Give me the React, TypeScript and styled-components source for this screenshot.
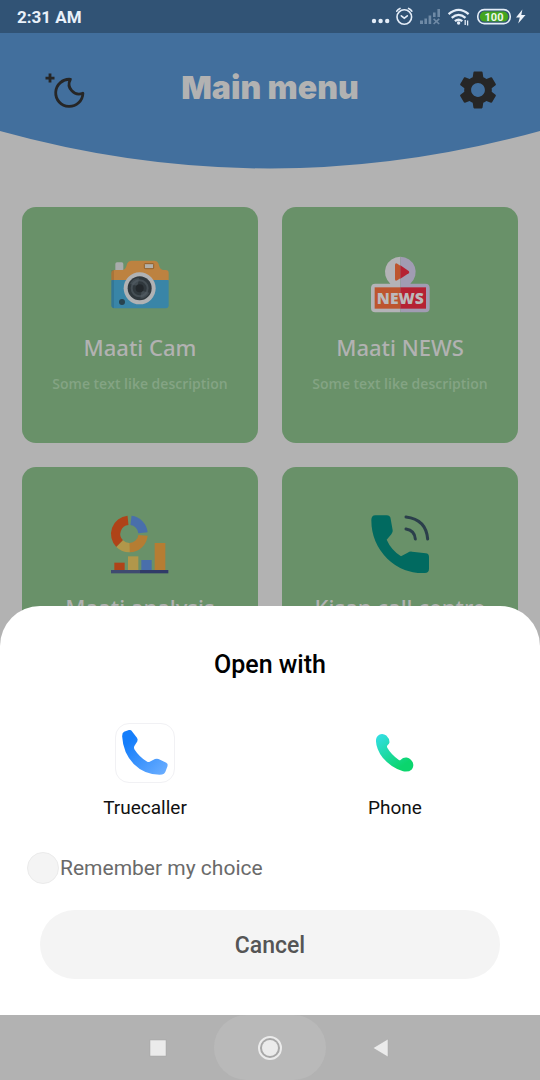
import React from "react";
import styled, { createGlobalStyle } from "styled-components";
import { MdSettings } from "react-icons/md";

const GlobalStyle = createGlobalStyle`
  *, *::before, *::after { box-sizing: border-box; }
  body { margin: 0; background: #b2b2b2; font-family: Roboto, sans-serif; }
  button, input { font: inherit; }
`;

const Screen = styled.div`
  min-height: 100vh;
  overflow: hidden;
`;

const StatusBar = styled.div`
  display: flex;
  align-items: center;
  justify-content: space-between;
  height: 33px;
  padding: 0 14px 0 17px;
  background: #315375;
`;

const Clock = styled.time`
  color: #e9f1fa;
  font-size: 17px;
  line-height: 20px;
  font-weight: 700;
`;

const StatusIcons = styled.svg`
  display: block;
  width: 156px;
  height: 33px;
`;

const Header = styled.header`
  display: flex;
  align-items: center;
  justify-content: space-between;
  height: 98px;
  padding: 16px 39px 0;
  background: #426f9d;
`;

const Title = styled.h1`
  margin: 0 0 4px;
  color: #b2b2b2;
  font-family: Inter, sans-serif;
  font-size: 32px;
  line-height: 40px;
  font-weight: 900;
`;

const IconButton = styled.button`
  display: flex;
  align-items: center;
  justify-content: center;
  width: 46px;
  height: 46px;
  padding: 0;
  border: 0;
  background: none;
  color: #262626;
`;

const Curve = styled.svg`
  display: block;
  width: 100%;
  height: 38px;
`;

const CardGrid = styled.main`
  display: grid;
  grid-template-columns: 1fr 1fr;
  gap: 24px;
  padding: 38px 22px;
`;

const Card = styled.article`
  display: flex;
  flex-direction: column;
  align-items: center;
  aspect-ratio: 1;
  padding-top: 47px;
  border-radius: 14px;
  background: #699169;
`;

const CardIcon = styled.svg`
  width: 60px;
  height: 60px;
`;

const CardTitle = styled.h2`
  margin: 18px 0 12px;
  color: #b2b2b2;
  font-family: "Noto Sans", sans-serif;
  font-size: 22px;
  line-height: 30px;
  font-weight: 500;
`;

const CardText = styled.p`
  margin: 0;
  color: #84a484;
  font-family: "Open Sans", sans-serif;
  font-size: 14px;
  line-height: 20px;
  font-weight: 600;
`;

const Overlay = styled.div`
  position: fixed;
  left: 0;
  right: 0;
  bottom: 0;
`;

const Sheet = styled.section`
  display: flex;
  flex-direction: column;
  padding: 43px 20px 36px;
  border-radius: 40px 40px 0 0;
  background: #fff;
`;

const SheetTitle = styled.h2`
  margin: 0 0 42px;
  color: #000;
  font-size: 25px;
  line-height: 32px;
  font-weight: 500;
  text-align: center;
`;

const AppList = styled.div`
  display: grid;
  grid-template-columns: 1fr 1fr;
`;

const AppButton = styled.button`
  display: flex;
  flex-direction: column;
  align-items: center;
  gap: 13px;
  padding: 0;
  border: 0;
  background: none;
  color: #111;
  font-size: 19px;
  line-height: 24px;
`;

const AppTile = styled.span<{ $outlined?: boolean }>`
  display: block;
  width: 60px;
  height: 60px;
  border-radius: 14px;
  border: 1px solid ${(p) => (p.$outlined ? "#f1f1f4" : "transparent")};

  svg { display: block; width: 100%; height: 100%; }
`;

const Remember = styled.label`
  display: flex;
  align-items: center;
  gap: 1px;
  margin: 32px 0 26px 7px;
  color: #6a6a6a;
  font-size: 21px;
  line-height: 32px;
`;

const RoundCheck = styled.input`
  appearance: none;
  width: 32px;
  height: 32px;
  margin: 0;
  border: 1px solid #ebebeb;
  border-radius: 50%;
  background: #f4f4f4;

  &:checked { background: #1a84ff; }
`;

const CancelButton = styled.button`
  height: 69px;
  margin: 0 20px;
  padding: 3px 0 0;
  border: 0;
  border-radius: 35px;
  background: #f4f4f4;
  color: #555;
  font-size: 23px;
  line-height: 28px;
  font-weight: 500;
`;

const NavBar = styled.nav`
  display: flex;
  justify-content: center;
  height: 65px;
  background: #b2b2b2;
`;

const NavButton = styled.button<{ $pressed?: boolean }>`
  display: flex;
  align-items: center;
  justify-content: center;
  width: 112px;
  padding: 0;
  border: 0;
  border-radius: 33px;
  background: ${(p) => (p.$pressed ? "#b9b9b9" : "transparent")};
`;

const StatusGlyphs = () => (
  <StatusIcons viewBox="370 0 156 33" aria-hidden="true">
    <g fill="#e4edf8">
      <circle cx="374" cy="21" r="2.2" />
      <circle cx="380.6" cy="21" r="2.2" />
      <circle cx="387.2" cy="21" r="2.2" />
    </g>
    <g fill="none" stroke="#e4edf8" strokeWidth="1.6" strokeLinecap="round">
      <circle cx="404.3" cy="17" r="7.3" />
      <path d="M401.3 15.8l3 2.4 3-2.4M396.8 11.2q1-2 3.2-2.8M411.8 11.2q-1-2-3.2-2.8" />
    </g>
    <g fill="#6f8aa6">
      <path d="M420 20.500h3V24h-3zM424.4 18.5h2.6V24h-2.6zM428.6 15.6h2.6V24h-2.6zM433 12.4h2.6V17H433zM437.4 9h2.6v8h-2.6z" />
      <path d="M433.6 18.8l5.6 5.2M439.2 18.8l-5.6 5.2" stroke="#6f8aa6" strokeWidth="1.6" />
    </g>
    <g fill="none" stroke="#e4edf8" strokeWidth="2.3">
      <path d="M448.6 14.2q10-8.6 20 0M451.7 17.8q6.900-5.8 13.8 0M454.9 21.2q3.7-3 7.4 0" />
    </g>
    <circle cx="458.6" cy="23" r="1.7" fill="#e4edf8" />
    <path d="M465.2 20v5M467.6 20.6v5" stroke="#e4edf8" strokeWidth="1.3" />
    <rect x="477.8" y="9.6" width="32.4" height="14" rx="6.4" fill="none" stroke="#e4edf8" strokeWidth="1.6" />
    <rect x="480" y="11.6" width="28" height="10" rx="4.4" fill="#43a51f" />
    <text x="494" y="20.800" textAnchor="middle" fontFamily="Roboto, sans-serif" fontSize="11" fontWeight="700" fill="#eef6ea">100</text>
    <path d="M522.4 9.6l-6.4 7.9h3.8l-1.6 5.9 7.3-8.4h-4.2z" fill="#eef3fa" />
  </StatusIcons>
);

const NightIcon = () => (
  <svg width="46" height="46" viewBox="-4 -1 46 46" fill="none" stroke="#262626" aria-hidden="true">
    <path d="M27.4 11.3A13.6 13.6 0 1 0 39.9 25.2A9.900 9.900 0 0 1 27.4 11.3Z" strokeWidth="2.8" strokeLinejoin="round" />
    <path d="M7 5.6v9M2.5 10.1h9" strokeWidth="2.800" />
  </svg>
);

const CameraIcon = () => (
  <CardIcon viewBox="60 42 180 180" aria-hidden="true">
    <path d="M76 90V72q0-5 5-5h14q5 0 5 5v18z" fill="#a9acac" />
    <path d="M64 122V100q0-10 10-10h24q7 0 10-8l4-12q3-8 12-8h70q8 0 11 8l4 12q3 8 10 8h8q9 0 9 9v23z" fill="#bd8240" />
    <path d="M64 120h172v76q0 9-9 9H74q-10 0-10-9z" fill="#3985a7" />
    <path d="M64 90h8v115q-8-1-8-9z" fill="#000" opacity=".1" />
    <rect x="163" y="71" width="28" height="15" rx="2" fill="#b2b0aa" stroke="#935f27" strokeWidth="3" />
    <circle cx="149" cy="145" r="48" fill="#b0b2b4" />
    <circle cx="149" cy="145" r="36" fill="#30383d" />
    <circle cx="149" cy="145" r="24" fill="none" stroke="#454e54" strokeWidth="6" />
    <path d="M120 132q8-18 27-18l-4 24zM178 158q-8 17-27 18l4-24z" fill="#566068" opacity=".5" />
    <circle cx="149" cy="145" r="12" fill="#23282c" />
    <circle cx="96" cy="186" r="9" fill="#28434f" />
  </CardIcon>
);

const NewsIcon = () => (
  <CardIcon viewBox="60 42 180 180" aria-hidden="true">
    <path d="M151 50a46 46 0 0 0-30 81H76q-13 0-13 13v60q0 13 13 13h75z" fill="#b4b3b7" />
    <path d="M151 50a46 46 0 0 1 30 81h45q13 0 13 13v60q0 13-13 13h-75z" fill="#a19cb3" />
    <path d="M135 75q0-7 7-4l9 6v38l-9 6q-7 4-7-4z" fill="#bd552e" />
    <path d="M151 76l25 17q4 4 0 7l-25 16z" fill="#b52133" />
    <path d="M74 142h77v64H74z" fill="#bd552e" />
    <path d="M151 142h77v64h-77z" fill="#b52133" />
    <text x="151" y="192" textAnchor="middle" fontFamily="Open Sans, sans-serif" fontSize="47" fontWeight="800" fill="#bcbabc">NEWS</text>
  </CardIcon>
);

const ChartIcon = () => (
  <CardIcon viewBox="60 42 180 180" aria-hidden="true">
    <g fill="none" strokeWidth="28">
      <path d="M114 61.200A41 41 0 0 0 89 131" stroke="#af4318" />
      <path d="M89 131A41 41 0 0 0 120 143" stroke="#b1974a" />
      <path d="M119 143A41 41 0 0 0 159 106" stroke="#b57d33" />
      <path d="M123 61.400A41 41 0 0 1 159 98" stroke="#496fab" />
    </g>
    <rect x="73" y="188" width="31" height="22" fill="#af4318" />
    <rect x="114" y="169" width="31" height="41" fill="#b1974a" />
    <rect x="154" y="180" width="31" height="30" fill="#496fab" />
    <rect x="194" y="129" width="32" height="81" fill="#b57d33" />
    <rect x="63" y="210" width="87" height="10" fill="#3f4a70" />
    <rect x="150" y="210" width="85" height="10" fill="#303b68" />
  </CardIcon>
);

const CallIcon = () => (
  <CardIcon viewBox="60 42 180 180" aria-hidden="true">
    <path d="M76 46h34q11 0 12 11l6 34q1 7-4 12l-14 16q13 30 43 50l20-11q6-4 13-3l41 5q10 1 10 11v35q0 13-13 13-65 2-112-43Q64 128 64 60q0-14 12-14z" fill="#016a60" />
    <g fill="none" stroke="#2b3f4b" strokeWidth="9" strokeLinecap="round">
      <path d="M168 51Q228 58 233 117" />
      <path d="M168 87Q194 91 196 117" />
    </g>
  </CardIcon>
);

const cards = [
  { title: "Maati Cam", icon: <CameraIcon /> },
  { title: "Maati NEWS", icon: <NewsIcon /> },
  { title: "Maati analysis", icon: <ChartIcon /> },
  { title: "Kisan call centre", icon: <CallIcon /> },
];

export default function App() {
  return (
    <Screen>
      <GlobalStyle />
      <StatusBar>
        <Clock>2:31 AM</Clock>
        <StatusGlyphs />
      </StatusBar>
      <Header>
        <IconButton aria-label="Night mode"><NightIcon /></IconButton>
        <Title>Main menu</Title>
        <IconButton aria-label="Settings"><MdSettings size={46} /></IconButton>
      </Header>
      <Curve viewBox="0 0 540 38" preserveAspectRatio="none" aria-hidden="true">
        <path d="M0 0Q270 75 540 0Z" fill="#426f9d" />
      </Curve>
      <CardGrid>
        {cards.map((card) => (
          <Card key={card.title}>
            {card.icon}
            <CardTitle>{card.title}</CardTitle>
            <CardText>Some text like description</CardText>
          </Card>
        ))}
      </CardGrid>
      <Overlay>
        <Sheet role="dialog" aria-labelledby="open-with">
          <SheetTitle id="open-with">Open with</SheetTitle>
          <AppList>
            <AppButton>
              <AppTile $outlined>
                <svg viewBox="45 38 180 180" aria-hidden="true">
                  <defs>
                    <linearGradient id="blue" x1="0" y1="0" x2="1" y2="1">
                      <stop offset=".2" stopColor="#157efb" />
                      <stop offset="1" stopColor="#6fb0ff" />
                    </linearGradient>
                  </defs>
                  <path d="M70 62l15-5q7-1 10 4l15 20q4 6 1 11l-9 14q-3 5 0 10 16 25 40 39 4 2 9-1l15-7q6-2 11 0l24 11q6 3 4 10l-7 19q-3 7-10 8-52 3-88-33-33-34-36-86 0-11 6-14z" fill="url(#blue)" />
                </svg>
              </AppTile>
              Truecaller
            </AppButton>
            <AppButton>
              <AppTile>
                <svg viewBox="45 38 180 180" aria-hidden="true">
                  <defs>
                    <linearGradient id="green" x1="0" y1="0" x2=".7" y2="1">
                      <stop offset="0" stopColor="#35dfea" />
                      <stop offset=".9" stopColor="#0bd56d" />
                    </linearGradient>
                  </defs>
                  <path d="M86 71Q98 66 108 74 118 83 118 95 118 100 111 105 109 108 111 112 124 134 147 150 150 152 153 149 160 141 171 142 183 144 190 157 195 169 187 179 178 188 160 185 123 174 97 143 77 116 76 92 75 77 86 71Z" fill="url(#green)" />
                </svg>
              </AppTile>
              Phone
            </AppButton>
          </AppList>
          <Remember>
            <RoundCheck type="checkbox" />
            Remember my choice
          </Remember>
          <CancelButton>Cancel</CancelButton>
        </Sheet>
        <NavBar>
          <NavButton aria-label="Recent apps">
            <svg width="18" height="18" aria-hidden="true"><rect x="1" y="1" width="16" height="16" fill="#ebebeb" stroke="#a4a4a4" strokeWidth=".5" /></svg>
          </NavButton>
          <NavButton $pressed aria-label="Home">
            <svg width="26" height="26" aria-hidden="true">
              <circle cx="13" cy="13" r="11" fill="#a8a8a8" stroke="#ebebeb" strokeWidth="2" />
              <circle cx="13" cy="13" r="8" fill="#ebebeb" />
            </svg>
          </NavButton>
          <NavButton aria-label="Back">
            <svg width="20" height="20" aria-hidden="true"><path d="M16 1v18L1 10z" fill="#ebebeb" stroke="#a4a4a4" strokeWidth=".5" /></svg>
          </NavButton>
        </NavBar>
      </Overlay>
    </Screen>
  );
}
